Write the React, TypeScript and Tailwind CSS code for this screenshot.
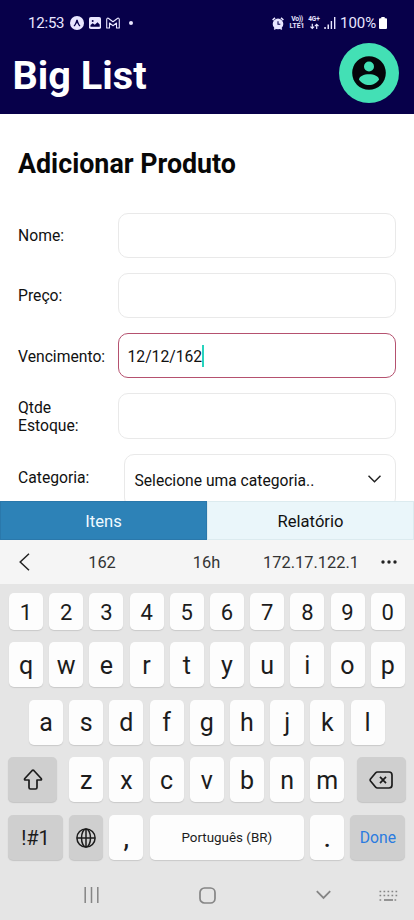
import type { ReactNode } from 'react';

function StatusBar() {
  return (
    <div className="flex h-[46px] items-center pl-[28px] pr-[27px] text-[#e9e6ff]">
      <span className="mt-[1px] w-[42px] text-[15px] leading-none tracking-[-0.2px]">12:53</span>
      <svg className="h-[14px] w-[14px]" viewBox="0 0 14 14">
        <circle cx="7" cy="7" r="7" fill="#e9e6ff" />
        <path d="M3.600 9.800C5 8.300 5.700 5.800 6.300 4.100q.7-1.300 1.400 0C8.300 5.800 9 8.300 10.400 9.800q-.6.900-1.400.2L7 6.800 5 10q-.8.700-1.400-.2z" fill="#07004a" />
      </svg>
      <svg className="ml-[5px] h-[12px] w-[12px]" viewBox="0 0 12 12">
        <rect width="12" height="12" rx="1.800" fill="#e9e6ff" />
        <circle cx="3.700" cy="4" r="1" fill="#07004a" />
        <path d="M1.500 9.700V8l2.200-1.700 2.100 1.500 2.700-2.500 2.200 2.200v2.200z" fill="#07004a" />
      </svg>
      <svg className="ml-[5px] h-[12px] w-[14px]" viewBox="0 0 14 12" fill="none" stroke="#e9e6ff" strokeWidth="1.100" strokeLinejoin="round">
        <path d="M.7 11V2.500Q.8.800 2.300 1.200L7 4.800l4.700-3.600Q13.200.800 13.300 2.500V11h-2.800V6L7 8.700 3.500 6v5z" />
      </svg>
      <span className="ml-[9px] h-[4px] w-[4px] rounded-full bg-[#e9e6ff]" />
      <svg className="ml-auto h-[13px] w-[12px]" viewBox="0 0 12 13">
        <path d="M.6 3L3 .8M11.400 3L9 .8M2.300 12.500l1.200-1.500M9.700 12.500L8.500 11" stroke="#e9e6ff" strokeWidth="1.600" />
        <circle cx="6" cy="6.900" r="5.300" fill="#e9e6ff" />
        <path d="M6 4.300v2.900h2.300" fill="none" stroke="#07004a" strokeWidth="1.100" />
      </svg>
      <span className="ml-[5px] flex w-[16px] flex-col items-center text-[6.800px] font-bold">
        <span className="h-[7px] whitespace-nowrap leading-[7px] tracking-[-0.3px]">Vo))</span>
        <span className="h-[7px] whitespace-nowrap leading-[7px]">LTE1</span>
      </span>
      <span className="ml-[3px] flex w-[12px] flex-col items-center text-[6.500px] font-bold leading-[7px]">
        <span>4G+</span>
        <svg className="h-[7px] w-[9px]" viewBox="0 0 9 7" fill="none" stroke="#e9e6ff" strokeWidth="1.200">
          <path d="M2.300.8v4.500M.5 3.700l1.800 1.800 1.800-1.800M6.700 6V1.500M4.900 3.200l1.800-1.800 1.800 1.800" />
        </svg>
      </span>
      <svg className="ml-[4px] h-[12px] w-[12px]" viewBox="0 0 12 12" fill="#e9e6ff">
        <path d="M.3 10h1.500v2H.3zM3.500 7.500H5V12H3.500zM6.700 4h1.400v8H6.700zM10 0h1.400v12H10z" />
      </svg>
      <span className="ml-[4px] mr-[1px] mt-[1px] w-[38px] whitespace-nowrap text-[15px] leading-none">100%</span>
      <svg className="h-[12px] w-[8px]" viewBox="0 0 8 12" fill="#fff">
        <path d="M2.300 0h3.400v1.300H7q1 0 1 1V11q0 1-1 1H1q-1 0-1-1V2.300q0-1 1-1h1.300z" />
      </svg>
    </div>
  );
}

function Field({ label, focused = false, children }: { label: string; focused?: boolean; children?: ReactNode }) {
  return (
    <div className="flex h-[45.300px] items-center">
      <label className="w-[99.500px] pt-[2px] text-[15.700px] leading-[18px]">
        <span className="whitespace-pre">{label}</span>
      </label>
      <div
        className={
          focused
            ? 'flex h-full flex-1 items-center rounded-[10px] border border-[#b5516f] pl-[9px]'
            : 'flex h-full flex-1 items-center rounded-[10px] border border-[#e9e9e9] pl-[9px]'
        }
      >
        {children}
      </div>
    </div>
  );
}

function Key({ children, className = 'h-[45px] w-[34px] text-[25px]' }: { children: ReactNode; className?: string }) {
  return (
    <div className={`flex shrink-0 items-center justify-center rounded-[5px] bg-[#fdfdfd] leading-none shadow-[0_1px_1px_#c9c9c9] ${className}`}>
      {children}
    </div>
  );
}

function FnKey({ children, className }: { children: ReactNode; className: string }) {
  return (
    <div className={`flex h-[45px] shrink-0 items-center justify-center rounded-[5px] bg-[#cfcfcf] leading-none shadow-[0_1px_1px_#c4c4c4] ${className}`}>
      {children}
    </div>
  );
}

function Keyboard() {
  return (
    <div className="flex h-[286px] flex-col bg-[#e5e5e5] pt-[9px] text-[#1c1c1c]">
      <div className="flex gap-[6.200px] pl-[9px]">
        {'1234567890'.split('').map((k) => (
          <Key key={k} className="h-[37px] w-[34px] pt-[2px] text-[22px]">{k}</Key>
        ))}
      </div>
      <div className="mt-[12px] flex gap-[6.200px] pl-[9px]">
        {'qwertyuiop'.split('').map((k) => (
          <Key key={k}><span className="mt-[1px]">{k}</span></Key>
        ))}
      </div>
      <div className="mt-[13px] flex gap-[6.200px] pl-[29px]">
        {'asdfghjkl'.split('').map((k) => (
          <Key key={k}>{k}</Key>
        ))}
      </div>
      <div className="mt-[12px] flex gap-[6.200px] pl-[8px]">
        <FnKey className="mr-[6px] w-[49px]">
          <svg className="h-[21px] w-[20px]" viewBox="0 0 20 21" fill="none" stroke="#1c1c1c" strokeWidth="1.700" strokeLinejoin="round">
            <path d="M9.200 1.500Q10 .8 10.800 1.500L18.200 9.500Q19 11 17.500 11H14v7.500Q14 20 12.500 20h-5Q6 20 6 18.500V11H2.500Q1 11 1.800 9.500z" />
          </svg>
        </FnKey>
        {'zxcvbnm'.split('').map((k) => (
          <Key key={k}><span className="mt-[1px]">{k}</span></Key>
        ))}
        <FnKey className="ml-[6px] w-[49px]">
          <svg className="h-[18px] w-[24px]" viewBox="0 0 24 18" fill="none" stroke="#1c1c1c" strokeWidth="1.700" strokeLinejoin="round">
            <path d="M8.500 1H20q3 0 3 3v10q0 3-3 3H8.500q-1.200 0-2-1L1.500 10q-.7-1 0-2l5-6q.8-1 2-1zM11 5.800l6 6.400M17 5.800l-6 6.400" />
          </svg>
        </FnKey>
      </div>
      <div className="mt-[13px] flex gap-[6.200px] pl-[8px]">
        <FnKey className="w-[55px] text-[20px]">!#1</FnKey>
        <FnKey className="w-[34px]">
          <svg className="h-[20px] w-[20px]" viewBox="0 0 20 20" fill="none" stroke="#1c1c1c" strokeWidth="1.500">
            <circle cx="10" cy="10" r="9.100" />
            <ellipse cx="10" cy="10" rx="4.500" ry="9.100" />
            <path d="M10 1v18M1 10h18" />
          </svg>
        </FnKey>
        <Key><span className="mt-[2px] font-medium">,</span></Key>
        <Key className="h-[45px] w-[154.500px] text-[13.400px]">Português (BR)</Key>
        <Key><span className="mt-[1px] font-medium">.</span></Key>
        <FnKey className="w-[55px] text-[15.700px] text-[#2a7be0]"><span className="mt-[1px]">Done</span></FnKey>
      </div>
    </div>
  );
}

function NavigationBar() {
  return (
    <div className="flex h-[50px] items-center bg-[#e5e5e5] pl-[84px] text-[#858585]">
      <svg className="h-[16px] w-[15px]" viewBox="0 0 15 16" stroke="currentColor" strokeWidth="1.500">
        <path d="M1.200 0v16M7.500 0v16M13.800 0v16" />
      </svg>
      <svg className="ml-[100px] h-[17px] w-[17px]" viewBox="0 0 17 17" fill="none" stroke="currentColor" strokeWidth="1.700">
        <rect x="1" y="1" width="15" height="15" rx="4.500" />
      </svg>
      <svg className="ml-[100px] h-[10px] w-[15px]" viewBox="0 0 15 10" fill="none" stroke="currentColor" strokeWidth="1.800">
        <path d="M.8 1.200l6.700 6.800 6.700-6.800" />
      </svg>
      <svg className="ml-[48px] mt-[2px] h-[12px] w-[19px]" viewBox="0 0 19 12" stroke="currentColor" strokeWidth="1.700">
        <path d="M.5 1.500h18M.5 5.500h18M.5 10h3M15.500 10h3" strokeDasharray="1.700 2.300" />
        <path d="M5 10h9" />
      </svg>
    </div>
  );
}

export default function App() {
  return (
    <div className="flex h-[920px] w-[414px] flex-col overflow-hidden bg-white font-['Roboto',sans-serif] text-[#111]">
      <header className="flex h-[113.500px] shrink-0 flex-col bg-[#07004a]">
        <StatusBar />
        <div className="-mt-[3px] flex items-center justify-between pl-[12.500px] pr-[15px]">
          <h1 className="mt-[5px] text-[39.700px] font-bold leading-none text-white">Big List</h1>
          <div className="flex h-[60px] w-[60px] items-center justify-center rounded-full bg-[#43e0b5]">
            <svg className="h-[34px] w-[34px]" viewBox="0 0 34 34">
              <circle cx="17" cy="17" r="16.800" fill="#05050a" />
              <circle cx="17" cy="10.500" r="5" fill="#43e0b5" />
              <path d="M7 23.500c0-3.300 5-5.300 10-5.300s10 2 10 5.300c-2 3.500-6 5.600-10 5.600s-8-2.100-10-5.600z" fill="#43e0b5" />
            </svg>
          </div>
        </div>
      </header>
      <main className="flex h-[387.500px] shrink-0 flex-col overflow-hidden px-[18px] pt-[35px]">
        <h2 className="text-[26.800px] font-bold leading-[30px] text-[#080808]">Adicionar Produto</h2>
        <div className="mt-[34px] flex flex-col gap-[15px]">
          <Field label="Nome:" />
          <Field label="Preço:" />
          <Field label="Vencimento:" focused>
            <span className="pt-[2px] text-[15.700px]">12/12/162</span>
            <span className="h-[22px] w-[2px] bg-[#27d3bd]" />
          </Field>
          <Field label={'Qtde\nEstoque:'} />
          <div className="flex">
            <span className="mt-[15px] w-[105.500px] text-[15.700px] leading-[18px]">Categoria:</span>
            <div className="flex h-[54px] flex-1 items-center justify-between rounded-[10px] border border-[#e9e9e9] pl-[10px] pr-[14px] text-[15.650px]">
              Selecione uma categoria..
              <svg className="-mt-[3px] h-[8px] w-[13px]" viewBox="0 0 13 8" fill="none" stroke="#222" strokeWidth="1.500">
                <path d="M.5.7l6 6 6-6" />
              </svg>
            </div>
          </div>
        </div>
      </main>
      <nav className="flex h-[39px] shrink-0 text-[16.600px]">
        <div className="flex flex-1 items-center justify-center border border-[#2a78ab] bg-[#2d82b7] pt-[3px] text-[#f0faff]">Itens</div>
        <div className="flex flex-1 items-center justify-center border border-[#dcebef] bg-[#eaf6fa] pt-[3px]">Relatório</div>
      </nav>
      <div className="flex h-[44px] shrink-0 items-center bg-[#f5f5f5] text-[16.400px] text-[#333]">
        <svg className="ml-[19px] h-[18px] w-[11px]" viewBox="0 0 11 18" fill="none" stroke="#222" strokeWidth="1.500">
          <path d="M10 .7L1.200 9l8.800 8.300" />
        </svg>
        <span className="ml-[20px] w-[104px] pt-[2px] text-center">162</span>
        <span className="w-[105px] pt-[2px] text-center">16h</span>
        <span className="w-[104px] pt-[2px] text-center">172.17.122.1</span>
        <svg className="ml-[18px] h-[4px] w-[16px]" viewBox="0 0 16 4" fill="#222">
          <circle cx="2" cy="2" r="1.700" />
          <circle cx="8" cy="2" r="1.700" />
          <circle cx="14" cy="2" r="1.700" />
        </svg>
      </div>
      <Keyboard />
      <NavigationBar />
    </div>
  );
}
